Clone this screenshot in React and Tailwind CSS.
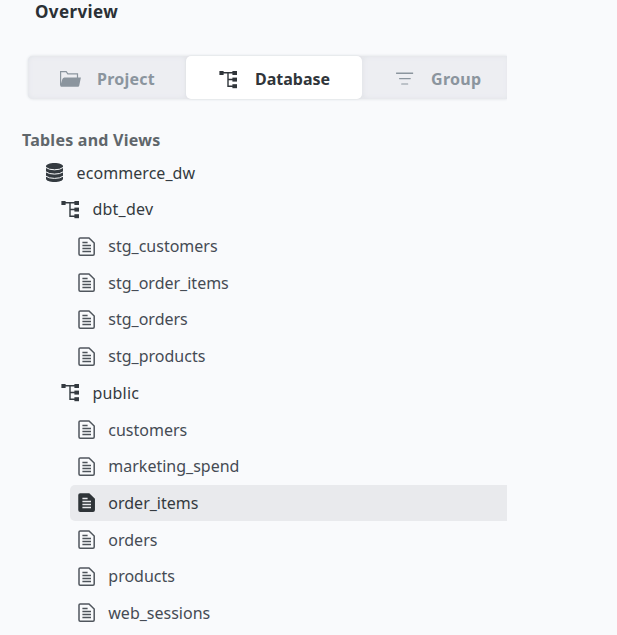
import React from "react";

function SchemaIcon() {
  return (
    <svg className="h-[19px] w-[19px] shrink-0" viewBox="0 0 19 19" fill="currentColor">
      <rect x="0.4" y="1" width="4.2" height="4" />
      <rect x="13.4" y="1" width="4.6" height="4" />
      <rect x="13.4" y="7.6" width="4.6" height="4" />
      <rect x="13.4" y="14.2" width="4.6" height="4" />
      <path d="M4 2.8H14M9 2.8V16.3H14M9 9.5H14" fill="none" stroke="currentColor" strokeWidth="1.4" />
    </svg>
  );
}

function FolderIcon() {
  return (
    <svg className="h-[18px] w-[22px] shrink-0" viewBox="0 0 22 18">
      <path d="M1.6 15.5V1.6H7.2L8.8 3.8H18.5V8" fill="none" stroke="currentColor" strokeWidth="1.2" />
      <path d="M5.4 7.4H21.9L20.2 15.8Q20 16.8 19 16.8H2Q1.2 16.6 1.4 15.6L3.4 9Q3.9 7.4 5.4 7.4Z" fill="currentColor" />
    </svg>
  );
}

function FilterIcon() {
  return (
    <svg className="h-[14px] w-[18px] shrink-0" viewBox="0 0 18 14" fill="currentColor">
      <rect x="0" y="0.4" width="17.2" height="1.6" rx=".4" />
      <rect x="3" y="6" width="11.8" height="1.2" rx=".4" />
      <rect x="5.2" y="11.4" width="7" height="1.2" rx=".4" />
    </svg>
  );
}

function DatabaseIcon() {
  return (
    <svg className="h-[19px] w-[17px] shrink-0" viewBox="0 0 17 19" fill="currentColor">
      <path d="M0 3.3C0 1.4 3.8 0 8.5 0S17 1.4 17 3.3V15.7C17 17.6 13.2 19 8.5 19S0 17.6 0 15.7Z" />
      <path d="M0 4.5Q2.8 6.8 8.5 6.8T17 4.5M0 8.9Q2.8 11.1 8.5 11.1T17 8.9M0 13.2Q2.8 15.4 8.5 15.4T17 13.2" fill="none" stroke="#f9fafc" strokeWidth="1" />
    </svg>
  );
}

function FileIcon({ filled }) {
  return (
    <svg className="h-[19px] w-[17px] shrink-0" viewBox="0 0 17 19" fill="none">
      <path
        d="M2.2.9H11L16.2 6V17Q16.2 18.2 15 18.2H2.2Q1 18.2 1 17V2.1Q1 .9 2.2.9Z"
        fill={filled ? "#2f3438" : "none"}
        stroke={filled ? "#2f3438" : "#50565d"}
        strokeWidth="1.5"
      />
      <path d="M4.4 5.4H9.6M4.4 8.6H13M4.4 11.5H13M4.4 14.4H13" stroke={filled ? "#e9eaed" : "#4d535a"} strokeWidth="1.5" />
    </svg>
  );
}

function Row({ icon, label, className }) {
  return (
    <div className={`flex h-[36.7px] items-center ${className}`}>
      {icon}
      <span className="whitespace-nowrap">{label}</span>
    </div>
  );
}

function Table({ name, active }) {
  return (
    <Row
      icon={<FileIcon filled={active} />}
      label={name}
      className={
        active
          ? "ml-[70px] gap-[13.3px] rounded-l-[5px] bg-[#e9eaed] pl-2 text-[#343a40]"
          : "ml-[70px] gap-[13.3px] pl-2 text-[#454b54]"
      }
    />
  );
}

export default function App() {
  return (
    <main className="h-[635px] w-[617px] overflow-hidden bg-[#f9fafc] font-['Noto_Sans',sans-serif] text-base text-[#343a40]">
      <div className="w-[507px]">
        <h1 className="h-[52px] pl-[35px] text-[17px] leading-[23px] font-bold tracking-[0.38px] text-[#2b3035]">Overview</h1>
        <div className="overflow-hidden pt-1 pb-1">
          <div className="ml-7 flex h-[43px] rounded-l-[5px] bg-[#e6e7eb] font-bold text-[#8b959e] shadow-[0_0_3px_#d9dce0]">
            <div className="flex w-[158px] items-center gap-[16px] rounded-[5px] bg-[#edeef2] pt-[3px] pl-[31px] shadow-[inset_0_0_5px_#e1e3e8]">
              <FolderIcon />
              <span className="tracking-[0.22px]">Project</span>
            </div>
            <div className="flex w-[176px] items-center gap-[17px] rounded-[5px] bg-white pt-[3px] pl-[33px] text-[#30353a] shadow-[0_0_2px_#d9dce0]">
              <SchemaIcon />
              <span>Database</span>
            </div>
            <div className="flex flex-1 items-center gap-[17px] rounded-l-[5px] bg-[#edeef2] pt-[3px] pl-[34px] shadow-[inset_1px_0_5px_#e1e3e8]">
              <FilterIcon />
              <span className="tracking-[0.3px]">Group</span>
            </div>
          </div>
        </div>
        <h2 className="mt-[25px] h-[26.4px] pl-[22px] text-base leading-6 font-bold tracking-[0.24px] text-[#60666b]">Tables and Views</h2>
        <Row icon={<DatabaseIcon />} label="ecommerce_dw" className="gap-[13.6px] pl-[46px] tracking-[0.06px]" />
        <Row icon={<SchemaIcon />} label="dbt_dev" className="gap-[12.4px] pl-[61px] tracking-[0.25px]" />
        <Table name="stg_customers" />
        <Table name="stg_order_items" />
        <Table name="stg_orders" />
        <Table name="stg_products" />
        <Row icon={<SchemaIcon />} label="public" className="gap-[12.4px] pl-[61px] tracking-[0.2px]" />
        <Table name="customers" />
        <Table name="marketing_spend" />
        <Table name="order_items" active />
        <Table name="orders" />
        <Table name="products" />
        <Table name="web_sessions" />
      </div>
    </main>
  );
}
